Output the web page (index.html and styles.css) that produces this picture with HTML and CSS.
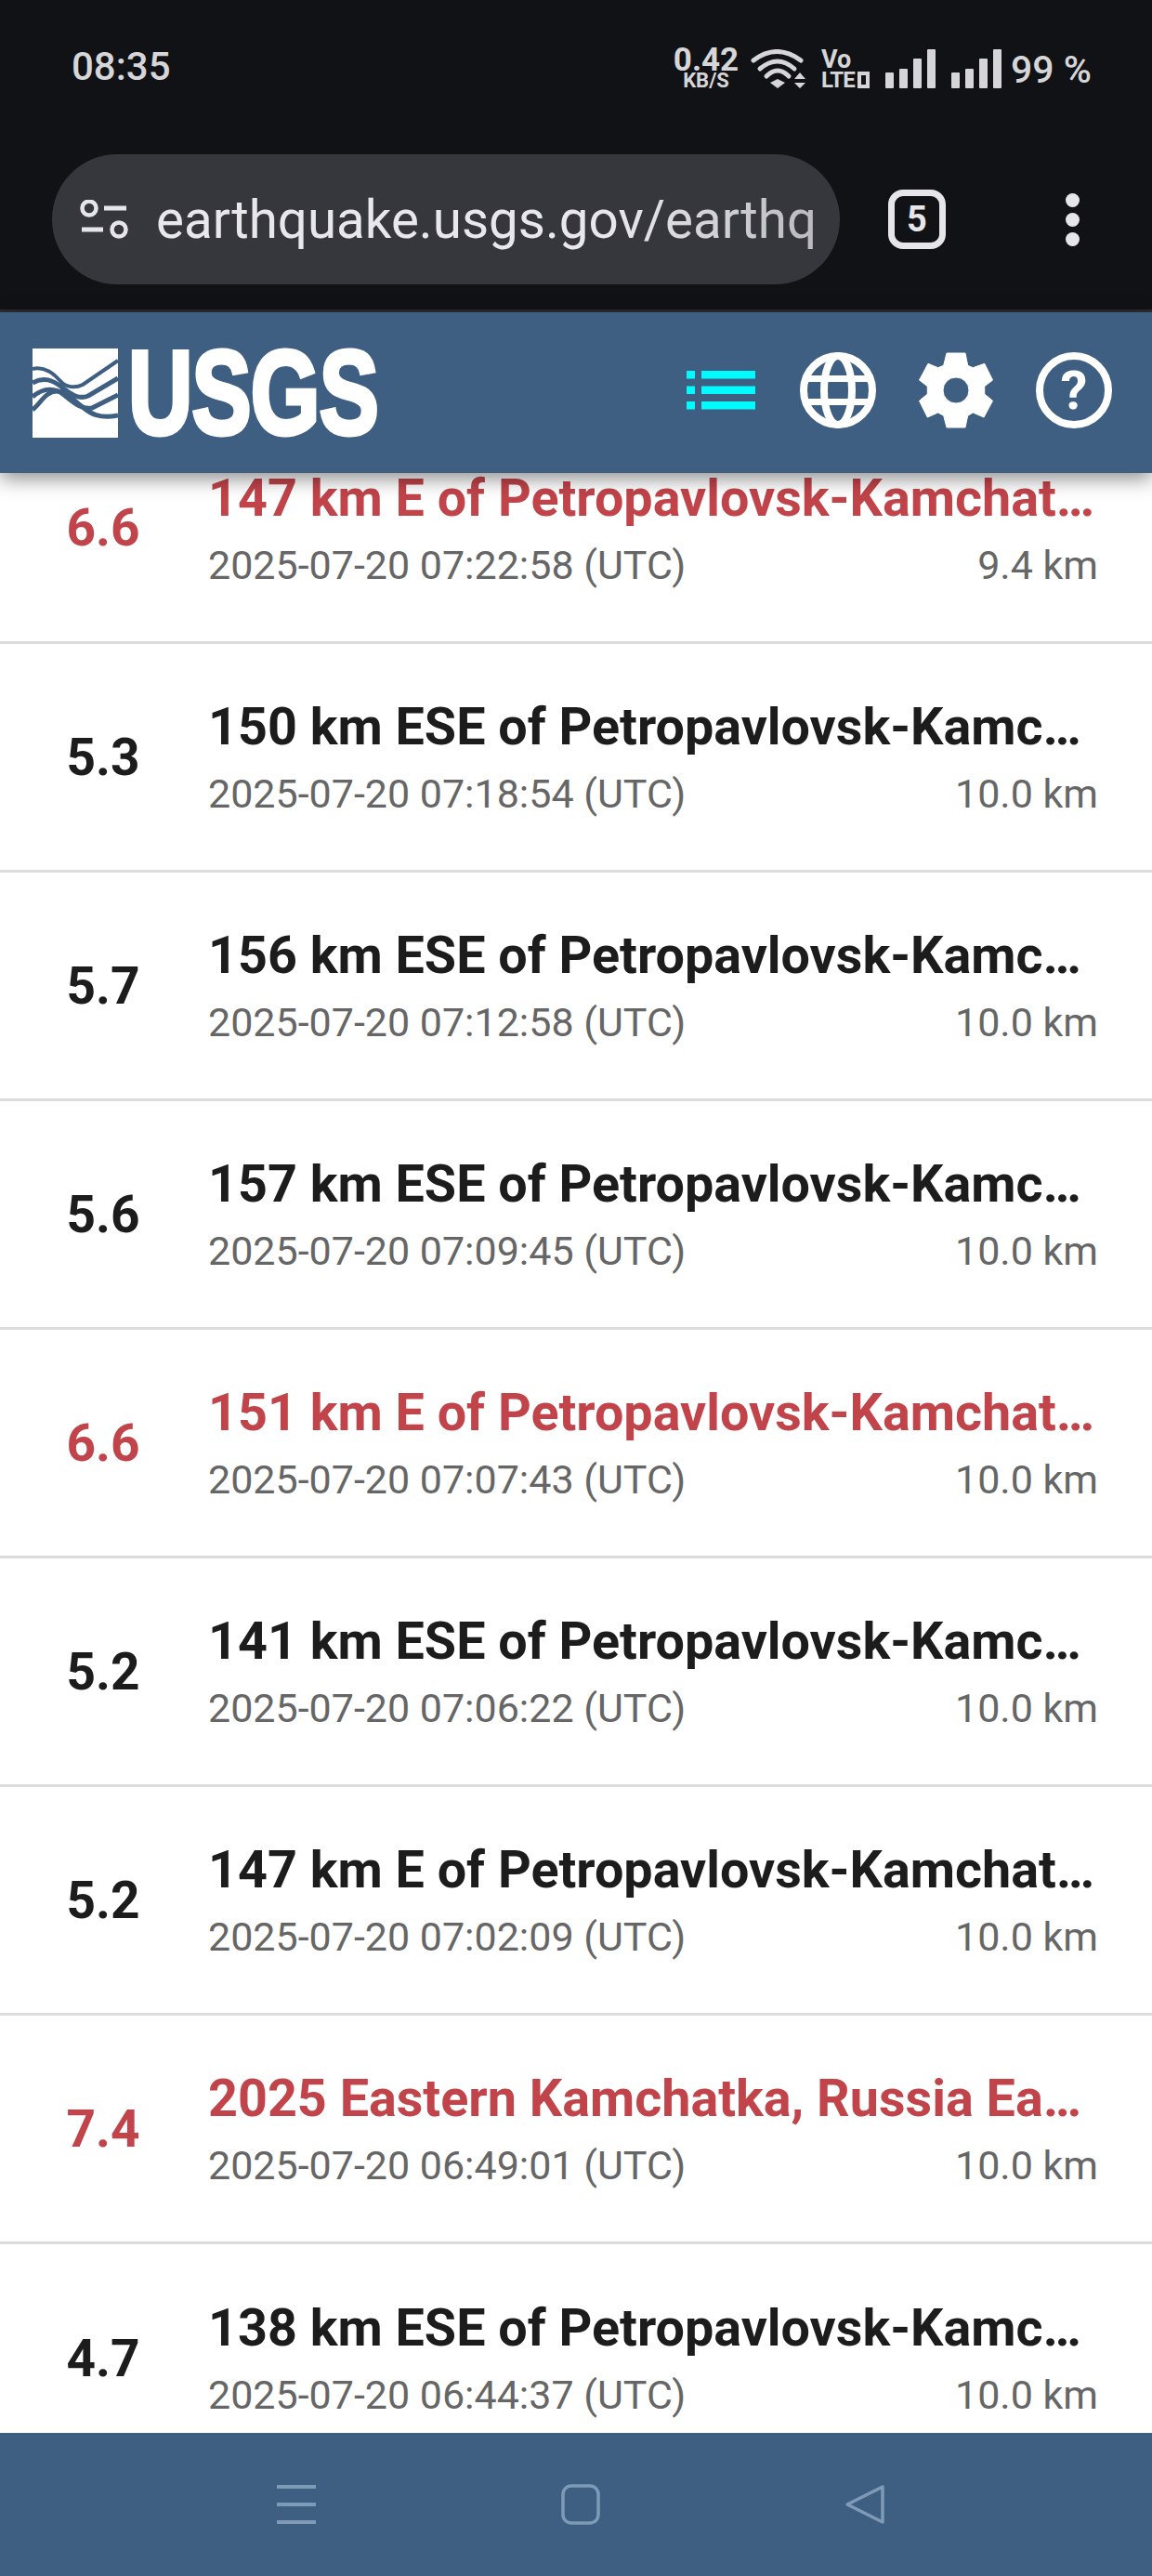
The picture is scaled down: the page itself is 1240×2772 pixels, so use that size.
FILE: index.html
```html
<!DOCTYPE html>
<html lang="en">
<head>
    <meta charset="UTF-8">
    <meta name="viewport" content="width=device-width, initial-scale=1.0">
    <title>Latest Earthquakes</title>
    <link rel="stylesheet" href="styles.css">
</head>
<body>
    <div class="phone">
        <div class="status-bar">
            <span class="clock">08:35</span>
            <div class="status-icons">
                <div class="speed"><span class="speed-num">0.42</span><span class="speed-unit">KB/S</span></div>
                <svg class="wifi" width="59" height="42" viewBox="0 0 59 42">
                    <g fill="none" stroke="#d6d6d8" stroke-width="5" stroke-linecap="round">
                        <path d="M3 12 Q28 -7 54 12"/>
                        <path d="M10 21 Q29 5 47 21"/>
                        <path d="M17 29 Q29 17 41 29"/>
                    </g>
                    <path d="M21 36 L29 32 L37 36 L29 42 Z" fill="#d6d6d8"/>
                    <path d="M47 32 L53 25 L59 32 Z M47 36 L59 36 L53 42 Z" fill="#d6d6d8"/>
                </svg>
                <div class="volte"><span class="vo">Vo</span><span class="lte">LTE<i class="lte-box"></i></span></div>
                <div class="signal"><i class="b1"></i><i class="b2"></i><i class="b3"></i><i class="b4"></i></div>
                <div class="signal"><i class="b1"></i><i class="b2"></i><i class="b3"></i><i class="b4"></i></div>
                <span class="battery">99 %</span>
            </div>
        </div>

        <div class="browser-bar">
            <div class="url-pill">
                <svg class="tune" width="52" height="42" viewBox="0 0 52 42">
                    <g fill="none" stroke="#e6e6ea" stroke-width="4.500">
                        <circle cx="10" cy="9" r="7.500"/>
                        <circle cx="42" cy="32" r="7.500"/>
                    </g>
                    <path d="M26 9 H50 M2 32 H25" stroke="#e6e6ea" stroke-width="5" fill="none"/>
                </svg>
                <div class="url-text">earthquake.usgs.gov/earthquakes/map</div>
            </div>
            <div class="tab-count">5</div>
            <div class="menu-dots"><i></i><i></i><i></i></div>
        </div>

        <header class="app-header">
            <div class="logo">
                <svg class="logo-mark" width="92" height="96" viewBox="0 0 92 96">
                    <rect width="92" height="96" fill="#fff"/>
                    <g fill="none" stroke="#3e5f82">
                        <path stroke-width="4" d="M0 22 C12 19 22 26 30 35 C36 42 46 43 54 39 L92 13"/>
                        <path stroke-width="5" d="M0 37 C12 30 22 34 32 42 C42 50 50 55 60 51 L92 32"/>
                        <path stroke-width="5" d="M0 52 C12 42 24 42 34 50 C46 60 54 66 64 64 L92 50"/>
                        <path stroke-width="5" d="M0 66 C8 60 14 46 26 46 C38 46 44 56 54 63 C62 70 72 76 92 72"/>
                    </g>
                </svg>
                <span class="logo-text">USGS</span>
            </div>
            <nav class="header-icons">
                <svg class="list-icon" width="74" height="42" viewBox="0 0 74 42">
                    <g fill="#00fbff">
                        <rect x="0" y="0" width="9" height="8.500"/><rect x="16" y="0" width="58" height="8.500"/>
                        <rect x="0" y="16.500" width="9" height="8.500"/><rect x="16" y="16.500" width="58" height="8.500"/>
                        <rect x="0" y="33" width="9" height="8.500"/><rect x="16" y="33" width="58" height="8.500"/>
                    </g>
                </svg>
                <svg width="82" height="82" viewBox="0 0 82 82">
                    <g fill="none" stroke="#fff">
                        <circle cx="41" cy="41" r="37" stroke-width="8"/>
                        <ellipse cx="41" cy="41" rx="15" ry="37" stroke-width="8"/>
                        <path d="M4 28.500 H78 M4 53.500 H78" stroke-width="7"/>
                    </g>
                </svg>
                <svg width="80" height="82" viewBox="0 0 80 82">
                    <path fill="#fff" fill-rule="evenodd" stroke="#fff" stroke-width="1" stroke-linejoin="round" d="M30 1 L50 1 L52.700 14.300 L58.300 16.700 L70.700 12.300 L79.500 30 L70.700 36.700 L70.700 45 L79.500 52.300 L70 70 L58.300 65 L52.700 68.300 L50 81 L30 81 L26.700 68.300 L20.700 65 L9.300 70 L0.500 52.300 L9.300 45 L9.300 36.700 L0.500 30 L10 12.300 L20.700 16.700 L26.700 14.300 Z M40 27 A14 14 0 1 0 40 55 A14 14 0 1 0 40 27 Z"/>
                </svg>
                <div class="help-icon">?</div>
            </nav>
        </header>

        <div class="quake-list">
            <div class="quake quake-first major">
                <div class="mag">6.6</div>
                <div class="info">
                    <div class="place">147 km E of Petropavlovsk-Kamchatsky, Russia</div>
                    <div class="meta"><span>2025-07-20 07:22:58 (UTC)</span><span>9.4 km</span></div>
                </div>
            </div>
            <div class="quake">
                <div class="mag">5.3</div>
                <div class="info">
                    <div class="place">150 km ESE of Petropavlovsk-Kamchatsky, Russia</div>
                    <div class="meta"><span>2025-07-20 07:18:54 (UTC)</span><span>10.0 km</span></div>
                </div>
            </div>
            <div class="quake">
                <div class="mag">5.7</div>
                <div class="info">
                    <div class="place">156 km ESE of Petropavlovsk-Kamchatsky, Russia</div>
                    <div class="meta"><span>2025-07-20 07:12:58 (UTC)</span><span>10.0 km</span></div>
                </div>
            </div>
            <div class="quake">
                <div class="mag">5.6</div>
                <div class="info">
                    <div class="place">157 km ESE of Petropavlovsk-Kamchatsky, Russia</div>
                    <div class="meta"><span>2025-07-20 07:09:45 (UTC)</span><span>10.0 km</span></div>
                </div>
            </div>
            <div class="quake major">
                <div class="mag">6.6</div>
                <div class="info">
                    <div class="place">151 km E of Petropavlovsk-Kamchatsky, Russia</div>
                    <div class="meta"><span>2025-07-20 07:07:43 (UTC)</span><span>10.0 km</span></div>
                </div>
            </div>
            <div class="quake">
                <div class="mag">5.2</div>
                <div class="info">
                    <div class="place">141 km ESE of Petropavlovsk-Kamchatsky, Russia</div>
                    <div class="meta"><span>2025-07-20 07:06:22 (UTC)</span><span>10.0 km</span></div>
                </div>
            </div>
            <div class="quake">
                <div class="mag">5.2</div>
                <div class="info">
                    <div class="place">147 km E of Petropavlovsk-Kamchatsky, Russia</div>
                    <div class="meta"><span>2025-07-20 07:02:09 (UTC)</span><span>10.0 km</span></div>
                </div>
            </div>
            <div class="quake major">
                <div class="mag">7.4</div>
                <div class="info">
                    <div class="place">2025 Eastern Kamchatka, Russia Earthquake</div>
                    <div class="meta"><span>2025-07-20 06:49:01 (UTC)</span><span>10.0 km</span></div>
                </div>
            </div>
            <div class="quake quake-last">
                <div class="mag">4.7</div>
                <div class="info">
                    <div class="place">138 km ESE of Petropavlovsk-Kamchatsky, Russia</div>
                    <div class="meta"><span>2025-07-20 06:44:37 (UTC)</span><span>10.0 km</span></div>
                </div>
            </div>
        </div>

        <div class="nav-bar">
            <svg width="44" height="44" viewBox="0 0 44 44"><path d="M1 3 H43 M1 22 H43 M1 41 H43" stroke="#7f9ab6" stroke-width="4" fill="none"/></svg>
            <svg width="44" height="44" viewBox="0 0 44 44"><rect x="3" y="2" width="38" height="40" rx="9" fill="none" stroke="#7f9ab6" stroke-width="3.500"/></svg>
            <svg width="44" height="44" viewBox="0 0 44 44"><path d="M41 3 V41 L3 22 Z" fill="none" stroke="#7f9ab6" stroke-width="3.500" stroke-linejoin="round"/></svg>
        </div>
    </div>
</body>
</html>
```

FILE: styles.css
```css
* { margin: 0; padding: 0; box-sizing: border-box; }
body { font-family: Roboto, "Liberation Sans", sans-serif; background: #fff; color: #1c1c1c; }
.phone { width: 1240px; height: 2772px; display: flex; flex-direction: column; overflow: hidden; }

/* status bar + browser bar */
.status-bar { height: 166px; flex: none; background: #111216; display: flex; justify-content: space-between; padding: 46px 65px 0 77px; color: #d6d6d8; }
.clock { font-size: 42px; font-weight: 500; line-height: 52px; height: 52px; }
.status-icons { display: flex; align-items: flex-start; height: 60px; margin-top: 6px; }
.speed { display: flex; flex-direction: column; align-items: center; width: 70px; margin-right: 13px; font-weight: 700; }
.speed-num { font-size: 35px; line-height: 25px; }
.speed-unit { font-size: 22px; line-height: 18px; margin-top: 1px; }
.wifi { margin-right: 17px; margin-top: 1px; }
.volte { display: flex; flex-direction: column; width: 53px; margin-top: 2px; margin-right: 16px; font-weight: 700; }
.vo { font-size: 27px; line-height: 20px; }
.lte { font-size: 24px; line-height: 18px; margin-top: 3px; display: flex; align-items: center; letter-spacing: -1px; }
.lte-box { width: 13px; height: 18px; border: 4px solid #d6d6d8; margin-left: 3px; }
.signal { display: flex; align-items: flex-end; gap: 6px; height: 42px; margin-top: 1px; margin-right: 17px; }
.signal i { display: block; width: 9px; background: #d6d6d8; border-radius: 1px; }
.signal .b1 { height: 17px; }
.signal .b2 { height: 21px; }
.signal .b3 { height: 32px; }
.signal .b4 { height: 42px; }
.signal + .signal { margin-right: 10px; }
.battery { font-size: 41px; font-weight: 500; line-height: 43px; margin-top: 2px; }

.browser-bar { height: 170px; flex: none; background: #111216; display: flex; align-items: flex-start; padding-left: 56px; border-bottom: 3px solid #2b2d31; }
.url-pill { width: 848px; height: 140px; background: #36373c; border-radius: 70px; display: flex; align-items: center; padding-left: 30px; }
.tune { flex: none; margin-right: 30px; }
.url-text { font-size: 56.5px; width: 708px; overflow: hidden; white-space: nowrap; color: #e8e8ec; height: 74px; line-height: 74px; margin-top: 2px; -webkit-mask-image: linear-gradient(to right, #000 70%, rgba(0,0,0,0.75) 100%); mask-image: linear-gradient(to right, #000 70%, rgba(0,0,0,0.75) 100%); }
.tab-count { width: 62px; height: 64px; margin: 38px 0 0 52px; border: 7px solid #e6e6ea; border-radius: 16px; color: #e6e6ea; font-size: 38px; font-weight: 700; display: flex; align-items: center; justify-content: center; }
.menu-dots { display: flex; flex-direction: column; gap: 6px; margin: 42px 0 0 129px; }
.menu-dots i { display: block; width: 15px; height: 15px; border-radius: 50%; background: #e6e6ea; }

/* usgs header */
.app-header { height: 173px; flex: none; background: #3e5f82; display: flex; align-items: center; justify-content: space-between; padding: 0 43px 0 35px; box-shadow: 0 6px 20px rgba(0,0,0,0.45); position: relative; z-index: 2; }
.logo { display: flex; align-items: center; height: 96px; }
.logo-text { font-family: "Liberation Sans", sans-serif; font-size: 128px; font-weight: 700; color: #fff; line-height: 96px; margin-left: 11px; transform: scaleX(0.75); transform-origin: left center; -webkit-text-stroke: 5px #fff; letter-spacing: -1px; }
.header-icons { display: flex; align-items: center; gap: 46px; padding-bottom: 6px; }
.list-icon { margin-right: 2px; }
.help-icon { width: 82px; height: 82px; border: 8px solid #fff; border-radius: 50%; color: #fff; font-size: 58px; font-weight: 700; display: flex; align-items: center; justify-content: center; }

/* list of quakes */
.quake-list { flex: 1; overflow: hidden; background: #fff; }
.quake { height: 246px; display: flex; border-bottom: 3px solid #dcdcdc; padding-right: 58px; align-items: center; }
.quake-first { height: 184px; align-items: flex-start; }
.mag { width: 224px; padding-right: 2px; flex: none; text-align: center; font-size: 55px; font-weight: 700; color: #1c1c1c; }
.info { flex: 1; min-width: 0; }
.place { font-size: 55.7px; font-weight: 700; line-height: 70px; white-space: nowrap; overflow: hidden; text-overflow: ellipsis; color: #1c1c1c; }
.meta { display: flex; justify-content: space-between; font-size: 43px; line-height: 58px; color: #666; margin-top: 8px; }
.quake.major .mag, .quake.major .place { color: #c1444a; }
.quake-first .mag { margin-top: 27px; }
.quake-first .info { margin-top: -8px; }
.quake-last { border-bottom: none; }

/* android nav bar */
.nav-bar { height: 154px; flex: none; background: #3e5f82; display: flex; justify-content: center; align-items: center; gap: 262px; padding-left: 10px; position: relative; z-index: 2; }
```
